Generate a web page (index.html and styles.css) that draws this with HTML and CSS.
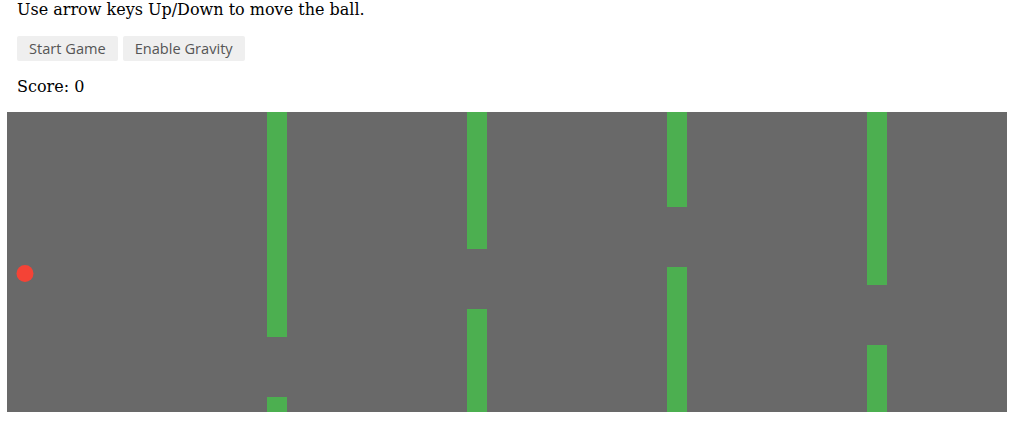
FILE: index.html
```html
<!DOCTYPE html>
<html>
<head>
<meta charset="utf-8">
<link rel="stylesheet" href="styles.css">
</head>
<body>
<div class="page">
  <p class="info">Use arrow keys Up/Down to move the ball.</p>
  <div class="controls">
    <button class="btn">Start Game</button>
    <button class="btn">Enable Gravity</button>
  </div>
  <p class="score">Score: 0</p>
  <svg class="game" width="1000" height="300" viewBox="0 0 1000 300">
    <rect x="0" y="0" width="1000" height="300" fill="#696969"/>
    <rect x="260" y="0" width="20" height="225" fill="#4caf50"/>
    <rect x="260" y="285" width="20" height="15" fill="#4caf50"/>
    <rect x="460" y="0" width="20" height="137" fill="#4caf50"/>
    <rect x="460" y="197" width="20" height="103" fill="#4caf50"/>
    <rect x="660" y="0" width="20" height="95" fill="#4caf50"/>
    <rect x="660" y="155" width="20" height="145" fill="#4caf50"/>
    <rect x="860" y="0" width="20" height="173" fill="#4caf50"/>
    <rect x="860" y="233" width="20" height="67" fill="#4caf50"/>
    <circle cx="18" cy="161.5" r="8.5" fill="#f44336"/>
  </svg>
</div>
</body>
</html>
```

FILE: styles.css
```css
html, body {
  margin: 0;
  padding: 0;
  background: #ffffff;
}
.page {
  padding: 0 7px;
  font-family: "DejaVu Serif", serif;
  font-size: 16px;
  color: #000;
}
.info {
  margin: 0;
  padding: 0 0 0 10px;
  line-height: 19px;
}
.controls {
  display: flex;
  gap: 5px;
  padding-left: 10px;
  margin-top: 17px;
}
.btn {
  font-family: "Open Sans", "DejaVu Sans", sans-serif;
  font-size: 14.6px;
  color: #555;
  background: #efefef;
  border: none;
  border-radius: 2px;
  height: 25px;
  padding: 0 12px;
  line-height: 25px;
}
.score {
  margin: 16px 0 0 0;
  padding-left: 10px;
  line-height: 20px;
}
.game {
  display: block;
  margin-top: 15px;
}
```
